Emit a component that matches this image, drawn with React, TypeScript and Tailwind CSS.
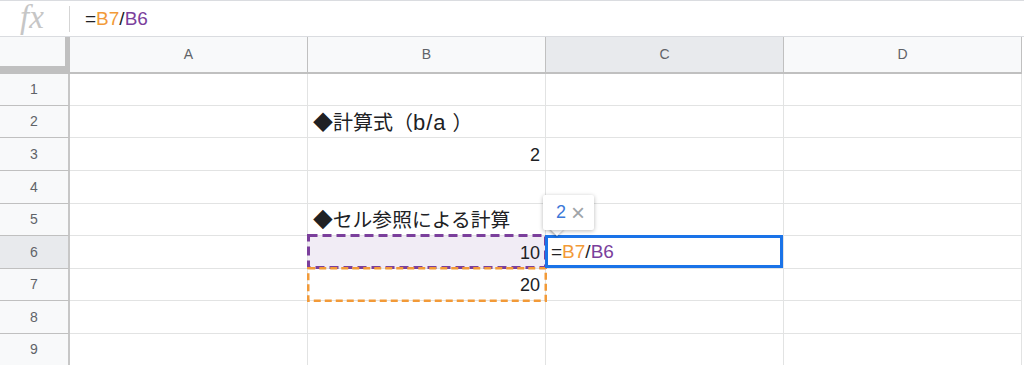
import React from "react";

const ROWS = [32, 32, 33, 33, 32, 33, 32, 33, 32];
const COLS = ["A", "B", "C", "D"];
const ORANGE = "#f29a38";
const PURPLE = "#7b3f9c";

function DashedBox({ w, h, color, sw, dash }: { w: number; h: number; color: string; sw: number; dash: string }) {
  return (
    <svg width={w} height={h} className="block">
      <rect
        x={sw / 2}
        y={sw / 2}
        width={w - sw}
        height={h - sw}
        fill="none"
        stroke={color}
        strokeWidth={sw}
        strokeDasharray={dash}
      />
    </svg>
  );
}

function Formula() {
  return (
    <span className="text-[19px] text-[#202124]">
      =<span className="text-[#f29a38]">B7</span>/<span className="text-[#7b3f9c]">B6</span>
    </span>
  );
}

function CellContent({ r, c }: { r: number; c: number }) {
  if (c === 1 && r === 2)
    return (
      <div className="h-full flex items-center pl-[5px] pt-[2px] text-[20px] whitespace-nowrap">
        <span>◆計算式</span>
        <span className="inline-block w-[20px] text-right">（</span>
        <span className="text-[22px] tracking-[1px]">b/a</span>
        <span className="inline-block w-[20px] ml-[6px] text-left">）</span>
      </div>
    );
  if (c === 1 && r === 3)
    return <div className="h-full flex items-center justify-end pr-[5px] pt-[2px] text-[18px]">2</div>;
  if (c === 1 && r === 5)
    return <div className="h-full flex items-center pl-[5px] pt-[2px] text-[19.8px] whitespace-nowrap">◆セル参照による計算</div>;
  if (c === 1 && r === 6)
    return (
      <>
        <div className="h-full flex items-center justify-end pr-[5px] pt-[2px] text-[18px] bg-[#f1ecf5]">10</div>
        <div className="absolute left-[-1px] top-[-2px] z-[5] pointer-events-none">
          <DashedBox w={240} h={35} color={PURPLE} sw={3} dash="9 5" />
        </div>
      </>
    );
  if (c === 1 && r === 7)
    return (
      <>
        <div className="h-full flex items-center justify-end pr-[5px] pt-[2px] text-[18px]">20</div>
        <div className="absolute left-[-1px] top-[-2px] z-[6] pointer-events-none">
          <DashedBox w={240} h={35} color={ORANGE} sw={2.5} dash="7 4" />
        </div>
      </>
    );
  if (c === 2 && r === 6)
    return (
      <>
        <div className="h-full flex items-center pl-[5px] pt-[1px]">
          <Formula />
        </div>
        <div className="absolute left-[-1px] top-[-1px] right-0 bottom-0 border-[3px] border-[#1a73e8] z-[7] pointer-events-none" />
        <div className="absolute left-[-3px] top-[-41px] z-20">
          <div className="relative">
            <div className="absolute left-[9px] top-[29px] w-[10px] h-[10px] rotate-45 bg-white shadow-[0_1px_3px_rgba(0,0,0,0.4)]" />
            <div className="relative w-[51px] h-[35px] bg-white rounded-[2px] shadow-[0_1px_4px_rgba(0,0,0,0.28)] flex items-center pl-[13px] gap-[5px]">
              <span className="text-[18px] text-[#3c78d8]">2</span>
              <span className="text-[24px] text-[#a0a4a8] leading-none">×</span>
            </div>
            <div className="absolute left-[7px] top-[28px] w-[15px] h-[6px] bg-white" />
          </div>
        </div>
      </>
    );
  return null;
}

export default function App() {
  return (
    <div className="w-[1024px] h-[365px] overflow-hidden bg-white font-[Liberation_Sans,Noto_Sans_CJK_JP,sans-serif] text-[#202124]">
      {/* formula bar */}
      <div className="h-[37px] flex items-center border-t border-b border-[#dadce0]">
        <div className="w-[64px] h-full flex items-center justify-center">
          <span className="font-[Liberation_Serif,serif] italic text-[33px] text-[#c6c6c6] leading-[34px] pb-[3px]">fx</span>
        </div>
        <div className="w-px h-[26px] bg-[#d5d5d5] ml-[5px]" />
        <div className="pl-[15px] pt-[1px]">
          <Formula />
        </div>
      </div>
      {/* column header */}
      <div className="h-[37px] flex">
        <div className="w-[70px] h-full shrink-0 bg-[#f8f9fa] border-r-[5px] border-b-[8px] border-[#c0c0c0]" />
        {COLS.map((c, i) => (
          <div
            key={c}
            className={`w-[238px] shrink-0 h-full border-r border-b-2 border-[#c0c0c0] flex items-center justify-center text-[14px] text-[#5f6368] ${
              i === 2 ? "bg-[#e8eaed]" : "bg-[#f8f9fa]"
            }`}
          >
            {c}
          </div>
        ))}
      </div>
      {/* rows */}
      {ROWS.map((h, idx) => {
        const r = idx + 1;
        return (
          <div key={r} className="flex" style={{ height: h }}>
            <div
              className={`w-[70px] shrink-0 h-full border-r-2 border-r-[#c7c7c7] border-b border-b-[#c0c0c0] flex items-center justify-center text-[14px] text-[#5f6368] ${
                r === 6 ? "bg-[#e8eaed]" : "bg-[#f8f9fa]"
              }`}
            >
              {r}
            </div>
            {COLS.map((c, ci) => (
              <div key={c} className="relative w-[238px] shrink-0 h-full border-r border-b border-[#e2e3e3]">
                <CellContent r={r} c={ci} />
              </div>
            ))}
          </div>
        );
      })}
    </div>
  );
}
